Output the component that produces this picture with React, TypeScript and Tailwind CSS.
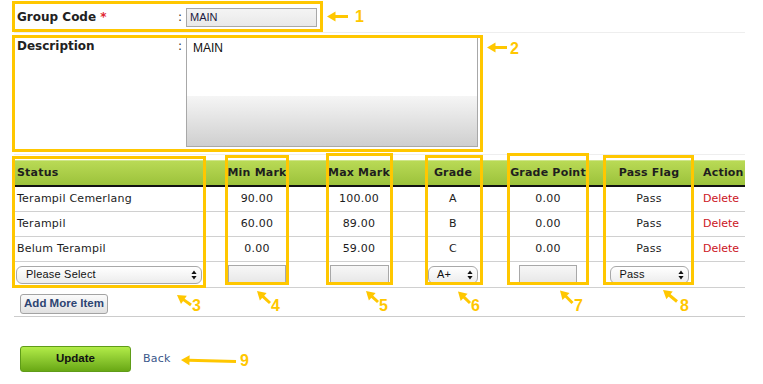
import React from "react";

const YELLOW = "#ffc700";

// Annotation boxes drawn on top of the form (left, top, width, height)
const BOXES: [number, number, number, number][] = [
  [12, 1, 311, 31],
  [12, 35, 471, 117],
  [12, 156, 194, 132],
  [225, 155, 64, 130],
  [326, 153, 67, 132],
  [425, 155, 58, 130],
  [507, 153, 82, 132],
  [603, 155, 91, 130],
];

// tip x, tip y, tail x, tail y
const ARROWS: [number, number, number, number][] = [
  [327, 16.5, 348, 16.5],
  [487, 47.5, 507, 47.5],
  [177, 295, 191, 305],
  [257, 291, 270, 303],
  [366, 291, 378, 302],
  [458, 291.5, 470, 303],
  [560, 290.5, 572.5, 303],
  [663, 290, 677, 301.5],
  [181, 360, 236, 361.5],
];

// label, left, top
const NUMBERS: [string, number, number][] = [
  ["1", 355, 9],
  ["2", 510, 41],
  ["3", 192, 298],
  ["4", 271, 298],
  ["5", 379, 298],
  ["6", 471, 298],
  ["7", 574, 298],
  ["8", 680, 298],
  ["9", 240, 353],
];

function Arrow({ tip, tail }: { tip: [number, number]; tail: [number, number] }) {
  const [x1, y1] = tip;
  const [x2, y2] = tail;
  const len = Math.hypot(x2 - x1, y2 - y1);
  const ux = (x2 - x1) / len;
  const uy = (y2 - y1) / len;
  const hl = 8.5;
  const hw = 5;
  const bx = x1 + ux * hl;
  const by = y1 + uy * hl;
  const pts = `${x1},${y1} ${bx - uy * hw},${by + ux * hw} ${bx + uy * hw},${by - ux * hw}`;
  return (
    <g>
      <line x1={bx - ux} y1={by - uy} x2={x2} y2={y2} stroke={YELLOW} strokeWidth={3} />
      <polygon points={pts} fill={YELLOW} />
    </g>
  );
}

function UpDown() {
  return (
    <svg width="6" height="10" viewBox="0 0 6 10" className="shrink-0">
      <path d="M3 0.5 L5.6 4 L0.4 4 Z M0.4 6 L5.6 6 L3 9.5 Z" fill="#111" />
    </svg>
  );
}

function Select({ label, className }: { label: string; className: string }) {
  return (
    <div
      className={`flex h-[18px] items-center justify-between rounded-[6px] border border-[#a8a8a8] bg-gradient-to-b from-white to-[#ececec] pr-[4px] font-['Liberation_Sans',sans-serif] text-[11px] tracking-[0.2px] text-[#111] ${className}`}
    >
      <span>{label}</span>
      <UpDown />
    </div>
  );
}

function Field({ className }: { className: string }) {
  return <div className={`h-[19px] border border-[#a8a8a8] bg-gradient-to-b from-[#f7f7f7] to-[#e7e7e7] ${className}`} />;
}

const ROWS = [
  ["Terampil Cemerlang", "90.00", "100.00", "A", "0.00", "Pass"],
  ["Terampil", "60.00", "89.00", "B", "0.00", "Pass"],
  ["Belum Terampil", "0.00", "59.00", "C", "0.00", "Pass"],
];

export default function App() {
  return (
    <div className="relative h-[384px] w-[763px] overflow-hidden bg-white font-['DejaVu_Sans',sans-serif] text-[#1c1c1c]">
      <div className="ml-[14px] w-[731px]">
        {/* Group code */}
        <div className="flex h-[33px] items-center border-b border-[#eeeeee] pt-[2px]">
          <div className="w-[164px] pl-[3px] text-[12px] font-bold text-[#222]">
            Group Code <span className="text-[#e0252f]">*</span>
          </div>
          <div className="w-[8px] text-[12px] text-[#333]">:</div>
          <div className="flex h-[19px] w-[131px] items-center border border-[#a8a8a8] bg-gradient-to-b from-[#f4f4f4] to-[#e9e9e9] pl-[3px] font-['Liberation_Sans',sans-serif] text-[11px] text-[#1b1a40]">
            MAIN
          </div>
        </div>

        {/* Description */}
        <div className="flex h-[122px] items-start border-b border-[#eeeeee] pt-[4px]">
          <div className="w-[164px] pl-[3px] pt-[2px] text-[12px] font-bold leading-[15px] text-[#222]">Description</div>
          <div className="w-[8px] pt-[2px] text-[12px] leading-[15px] text-[#333]">:</div>
          <div className="h-[110px] w-[292px] border border-[#a8a8a8] bg-[linear-gradient(to_bottom,#ffffff_0%,#ffffff_54%,#f5f5f5_54%,#cfcfcf_100%)] pl-[6px] pt-[3px] font-['Liberation_Sans',sans-serif] text-[12px] leading-[14px] text-[#111]">
            MAIN
          </div>
        </div>

        {/* Grade table */}
        <div className="mt-[5px] text-[11px] tracking-[0.25px]">
          <div className="flex h-[27px] items-center border-t border-t-[#cfe68a] border-b-2 border-b-[#111] bg-gradient-to-b from-[#b9da55] to-[#9cc23b] font-bold tracking-[0.2px] text-[#1e1e1e]">
            <div className="w-[199px] pl-[3px]">Status</div>
            <div className="w-[88px] text-center">Min Mark</div>
            <div className="w-[116px] text-center">Max Mark</div>
            <div className="w-[72px] text-center">Grade</div>
            <div className="w-[118px] text-center">Grade Point</div>
            <div className="w-[84px] text-center">Pass Flag</div>
            <div className="w-[54px] pl-[12px]">Action</div>
          </div>
          {ROWS.map((r) => (
            <div key={r[0]} className="flex h-[25px] items-center border-b border-[#d0d0d0]">
              <div className="w-[199px] pl-[3px]">{r[0]}</div>
              <div className="w-[88px] text-center">{r[1]}</div>
              <div className="w-[116px] text-center">{r[2]}</div>
              <div className="w-[72px] text-center">{r[3]}</div>
              <div className="w-[118px] text-center">{r[4]}</div>
              <div className="w-[84px] text-center">{r[5]}</div>
              <div className="w-[54px] pl-[12px] tracking-normal text-[#cc1424]">Delete</div>
            </div>
          ))}
          <div className="flex h-[26px] items-center border-b border-[#d0d0d0]">
            <div className="w-[199px] pl-[2px]">
              <Select label="Please Select" className="w-[186px] pl-[9px]" />
            </div>
            <div className="flex w-[88px] justify-center">
              <Field className="w-[58px]" />
            </div>
            <div className="flex w-[116px] justify-center">
              <Field className="w-[59px]" />
            </div>
            <div className="flex w-[72px] justify-center">
              <Select label="A+" className="w-[50px] pl-[8px]" />
            </div>
            <div className="flex w-[118px] justify-center">
              <Field className="w-[58px]" />
            </div>
            <div className="flex w-[84px] justify-center">
              <Select label="Pass" className="w-[79px] pl-[9px]" />
            </div>
            <div className="w-[54px]" />
          </div>
        </div>

        {/* Add more */}
        <div className="border-b border-[#cccccc] pb-[2px] pl-[6px] pt-[6px]">
          <button className="flex h-[20px] w-[88px] items-center justify-center rounded-[3px] border border-[#a3a3a3] bg-gradient-to-b from-[#fbfbfb] to-[#e1e1e1] font-['Liberation_Sans',sans-serif] text-[11.5px] font-bold text-[#2d4472]">
            Add More Item
          </button>
        </div>

        {/* Actions */}
        <div className="ml-[6px] mt-[29px] flex items-center">
          <button className="flex h-[26px] w-[111px] items-center justify-center rounded-[3px] border border-[#5f9c18] bg-gradient-to-b from-[#b2ec48] to-[#69a814] font-['Liberation_Sans',sans-serif] text-[11.5px] font-bold text-[#111]">
            Update
          </button>
          <a className="ml-[12px] text-[11px] tracking-[0.2px] text-[#3a578a]">Back</a>
        </div>
      </div>

      {/* Annotations */}
      {BOXES.map(([l, t, w, h], i) => (
        <div
          key={i}
          className="pointer-events-none absolute border-[3px] border-[#ffc700]"
          style={{ left: l, top: t, width: w, height: h }}
        />
      ))}
      <svg className="pointer-events-none absolute left-0 top-0" width="763" height="384">
        {ARROWS.map(([a, b, c, d], i) => (
          <Arrow key={i} tip={[a, b]} tail={[c, d]} />
        ))}
      </svg>
      {NUMBERS.map(([n, l, t]) => (
        <span
          key={n}
          className="absolute font-['Liberation_Sans',sans-serif] text-[16px] font-bold leading-none text-[#ffc700]"
          style={{ left: l, top: t }}
        >
          {n}
        </span>
      ))}
    </div>
  );
}
